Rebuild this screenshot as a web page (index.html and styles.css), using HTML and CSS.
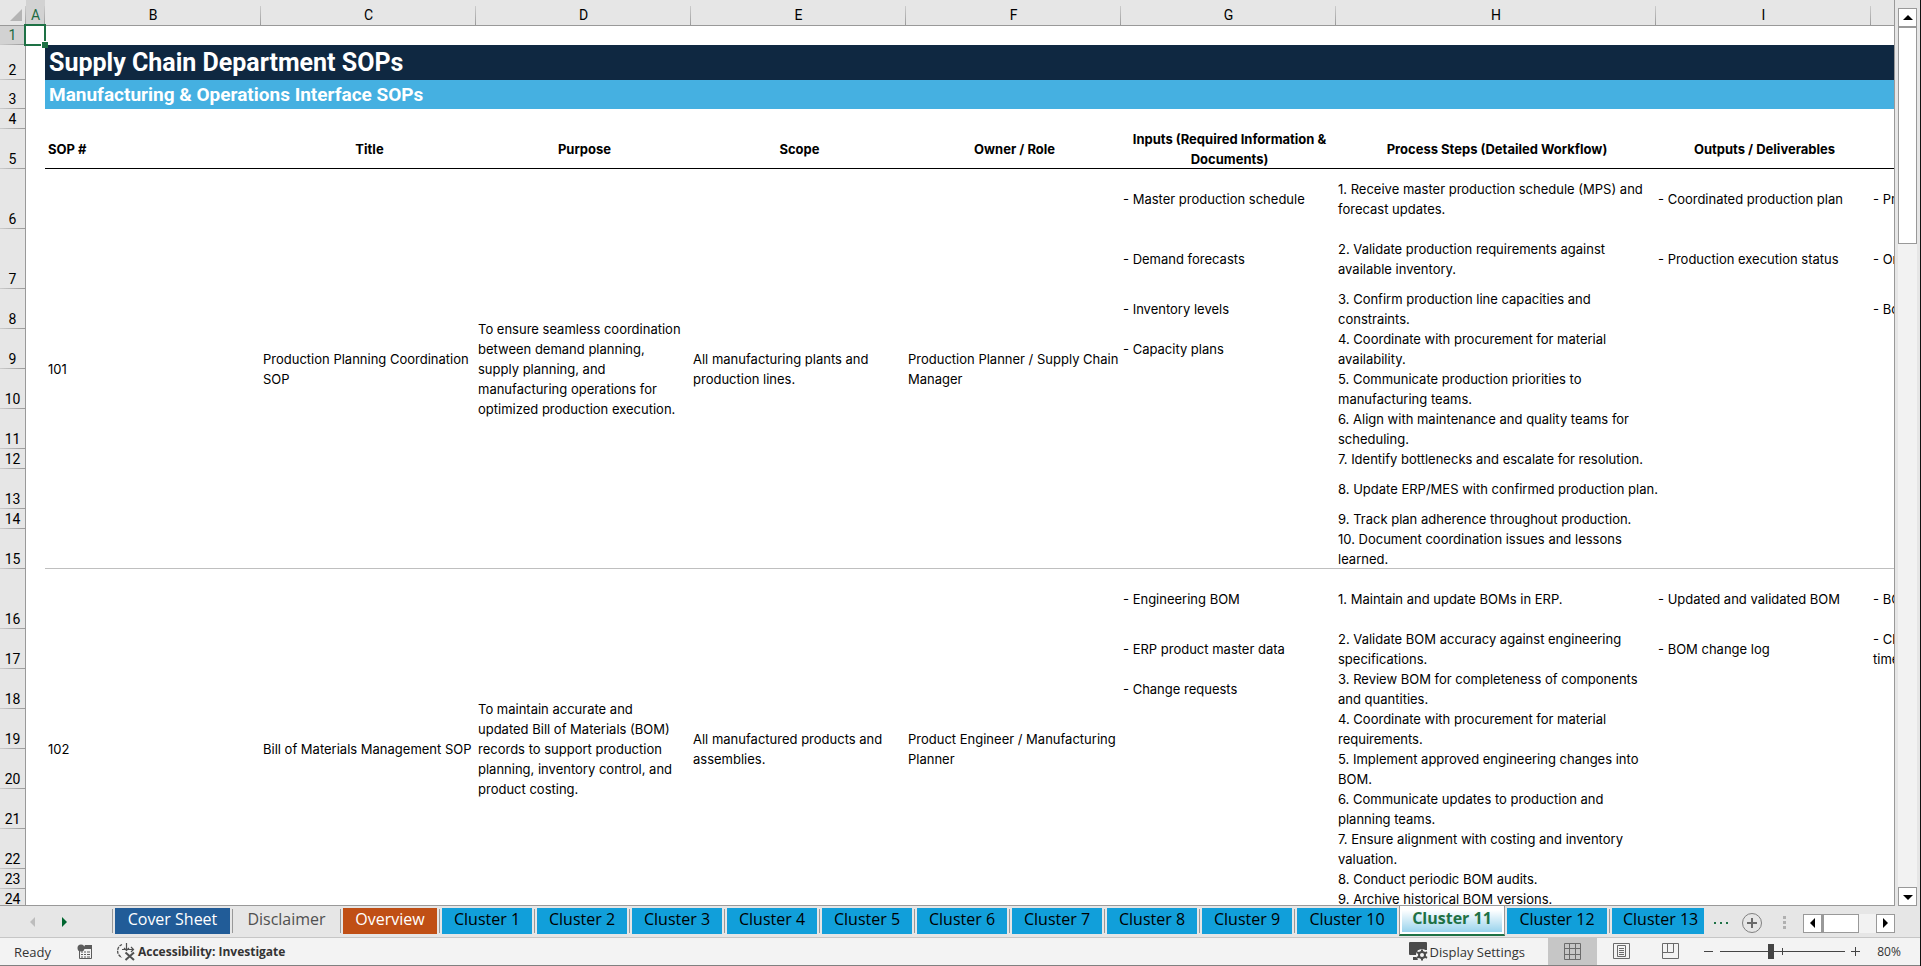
FILE: index.html
```html
<!DOCTYPE html>
<html lang="en">
<head>
    <meta charset="UTF-8">
    <meta name="viewport" content="width=device-width, initial-scale=1.0">
    <title>Supply Chain Department SOPs</title>
    <link rel="stylesheet" href="styles.css">
</head>
<body>
    <!-- Sheet -->
    <main class="workspace">
        <div class="grid">
            <table class="sheet">
                <colgroup>
                    <col class="col-num">
                    <col class="col-a">
                    <col class="col-b">
                    <col class="col-std">
                    <col class="col-std">
                    <col class="col-std">
                    <col class="col-std">
                    <col class="col-std">
                    <col class="col-steps">
                    <col class="col-std">
                    <col class="col-std">
                </colgroup>
                <thead>
                    <tr>
                        <th class="corner"><svg width="13" height="13" viewBox="0 0 13 13"><path d="M12 0v12H0z" fill="#b4b4b4"/></svg></th>
                        <th class="selected">A</th>
                        <th>B</th>
                        <th>C</th>
                        <th>D</th>
                        <th>E</th>
                        <th>F</th>
                        <th>G</th>
                        <th>H</th>
                        <th>I</th>
                        <th></th>
                    </tr>
                </thead>
                <tbody>
                    <tr class="h19">
                        <th class="selected">1</th>
                        <td class="active-cell"></td>
                        <td colspan="9"></td>
                    </tr>
                    <tr class="h35">
                        <th>2</th>
                        <td></td>
                        <td class="band-dark" colspan="9">Supply Chain Department SOPs</td>
                    </tr>
                    <tr class="h29">
                        <th>3</th>
                        <td></td>
                        <td class="band-light" colspan="9">Manufacturing &amp; Operations Interface SOPs</td>
                    </tr>
                    <tr class="h20">
                        <th>4</th>
                        <td></td>
                        <td colspan="9"></td>
                    </tr>
                    <tr class="h40 headings">
                        <th>5</th>
                        <td></td>
                        <td class="first">SOP #</td>
                        <td>Title</td>
                        <td>Purpose</td>
                        <td>Scope</td>
                        <td>Owner / Role</td>
                        <td>Inputs (Required Information &amp;<br>Documents)</td>
                        <td>Process Steps (Detailed Workflow)</td>
                        <td>Outputs / Deliverables</td>
                        <td></td>
                    </tr>

                    <!-- SOP 101 -->
                    <tr class="h60">
                        <th>6</th>
                        <td rowspan="10"></td>
                        <td class="first end" rowspan="10">101</td>
                        <td class="end" rowspan="10">Production Planning Coordination<br>SOP</td>
                        <td class="end" rowspan="10">To ensure seamless coordination<br>between demand planning,<br>supply planning, and<br>manufacturing operations for<br>optimized production execution.</td>
                        <td class="end" rowspan="10">All manufacturing plants and<br>production lines.</td>
                        <td class="end" rowspan="10">Production Planner / Supply Chain<br>Manager</td>
                        <td>- Master production schedule</td>
                        <td>1. Receive master production schedule (MPS) and<br>forecast updates.</td>
                        <td>- Coordinated production plan</td>
                        <td>- Production</td>
                    </tr>
                    <tr class="h60">
                        <th>7</th>
                        <td>- Demand forecasts</td>
                        <td>2. Validate production requirements against<br>available inventory.</td>
                        <td>- Production execution status</td>
                        <td>- Order</td>
                    </tr>
                    <tr class="h40">
                        <th>8</th>
                        <td>- Inventory levels</td>
                        <td>3. Confirm production line capacities and<br>constraints.</td>
                        <td></td>
                        <td>- Bottleneck</td>
                    </tr>
                    <tr class="h40">
                        <th>9</th>
                        <td>- Capacity plans</td>
                        <td>4. Coordinate with procurement for material<br>availability.</td>
                        <td></td>
                        <td></td>
                    </tr>
                    <tr class="h40">
                        <th>10</th>
                        <td></td>
                        <td>5. Communicate production priorities to<br>manufacturing teams.</td>
                        <td></td>
                        <td></td>
                    </tr>
                    <tr class="h40">
                        <th>11</th>
                        <td></td>
                        <td>6. Align with maintenance and quality teams for<br>scheduling.</td>
                        <td></td>
                        <td></td>
                    </tr>
                    <tr class="h20">
                        <th>12</th>
                        <td></td>
                        <td>7. Identify bottlenecks and escalate for resolution.</td>
                        <td></td>
                        <td></td>
                    </tr>
                    <tr class="h40">
                        <th>13</th>
                        <td></td>
                        <td>8. Update ERP/MES with confirmed production plan.</td>
                        <td></td>
                        <td></td>
                    </tr>
                    <tr class="h20">
                        <th>14</th>
                        <td></td>
                        <td>9. Track plan adherence throughout production.</td>
                        <td></td>
                        <td></td>
                    </tr>
                    <tr class="h40">
                        <th>15</th>
                        <td class="end"></td>
                        <td class="end">10. Document coordination issues and lessons<br>learned.</td>
                        <td class="end"></td>
                        <td class="end"></td>
                    </tr>

                    <!-- SOP 102 -->
                    <tr class="h60">
                        <th>16</th>
                        <td rowspan="10"></td>
                        <td class="first" rowspan="10">102</td>
                        <td rowspan="10">Bill of Materials Management SOP</td>
                        <td rowspan="10">To maintain accurate and<br>updated Bill of Materials (BOM)<br>records to support production<br>planning, inventory control, and<br>product costing.</td>
                        <td rowspan="10">All manufactured products and<br>assemblies.</td>
                        <td rowspan="10">Product Engineer / Manufacturing<br>Planner</td>
                        <td>- Engineering BOM</td>
                        <td>1. Maintain and update BOMs in ERP.</td>
                        <td>- Updated and validated BOM</td>
                        <td>- BOM</td>
                    </tr>
                    <tr class="h40">
                        <th>17</th>
                        <td>- ERP product master data</td>
                        <td>2. Validate BOM accuracy against engineering<br>specifications.</td>
                        <td>- BOM change log</td>
                        <td>- Change<br>time</td>
                    </tr>
                    <tr class="h40">
                        <th>18</th>
                        <td>- Change requests</td>
                        <td>3. Review BOM for completeness of components<br>and quantities.</td>
                        <td></td>
                        <td></td>
                    </tr>
                    <tr class="h40">
                        <th>19</th>
                        <td></td>
                        <td>4. Coordinate with procurement for material<br>requirements.</td>
                        <td></td>
                        <td></td>
                    </tr>
                    <tr class="h40">
                        <th>20</th>
                        <td></td>
                        <td>5. Implement approved engineering changes into<br>BOM.</td>
                        <td></td>
                        <td></td>
                    </tr>
                    <tr class="h40">
                        <th>21</th>
                        <td></td>
                        <td>6. Communicate updates to production and<br>planning teams.</td>
                        <td></td>
                        <td></td>
                    </tr>
                    <tr class="h40">
                        <th>22</th>
                        <td></td>
                        <td>7. Ensure alignment with costing and inventory<br>valuation.</td>
                        <td></td>
                        <td></td>
                    </tr>
                    <tr class="h20">
                        <th>23</th>
                        <td></td>
                        <td>8. Conduct periodic BOM audits.</td>
                        <td></td>
                        <td></td>
                    </tr>
                    <tr class="h20">
                        <th>24</th>
                        <td></td>
                        <td>9. Archive historical BOM versions.</td>
                        <td></td>
                        <td></td>
                    </tr>
                    <tr class="h20">
                        <th></th>
                        <td></td>
                        <td></td>
                        <td></td>
                        <td></td>
                    </tr>
                </tbody>
            </table>
        </div>
        <div class="vscroll">
            <button class="scroll-btn" aria-label="Scroll up"><svg width="10" height="6" viewBox="0 0 10 6"><path d="M5 0l5 5H0z"/></svg></button>
            <div class="v-thumb"></div>
            <div class="v-track"></div>
            <button class="scroll-btn" aria-label="Scroll down"><svg width="10" height="6" viewBox="0 0 10 6"><path d="M0 1h10L5 6z"/></svg></button>
        </div>
    </main>

    <!-- Sheet tabs -->
    <nav class="tabbar">
        <div class="tab-nav">
            <button aria-label="Previous sheet"><svg width="6" height="10" viewBox="0 0 6 10"><path d="M5 0v10L0 5z" fill="#bdbdbd"/></svg></button>
            <button aria-label="Next sheet"><svg width="6" height="10" viewBox="0 0 6 10"><path d="M0 0v10l5-5z" fill="#00652f"/></svg></button>
        </div>
        <div class="tabs">
            <span class="sep"></span>
            <button class="tab navy">Cover Sheet</button>
            <span class="sep"></span>
            <button class="tab plain">Disclaimer</button>
            <span class="sep"></span>
            <button class="tab orange">Overview</button>
            <span class="sep"></span>
            <button class="tab">Cluster 1</button>
            <span class="sep"></span>
            <button class="tab">Cluster 2</button>
            <span class="sep"></span>
            <button class="tab">Cluster 3</button>
            <span class="sep"></span>
            <button class="tab">Cluster 4</button>
            <span class="sep"></span>
            <button class="tab">Cluster 5</button>
            <span class="sep"></span>
            <button class="tab">Cluster 6</button>
            <span class="sep"></span>
            <button class="tab">Cluster 7</button>
            <span class="sep"></span>
            <button class="tab">Cluster 8</button>
            <span class="sep"></span>
            <button class="tab">Cluster 9</button>
            <span class="sep"></span>
            <button class="tab wide">Cluster 10</button>
            <button class="tab current">Cluster 11</button>
            <button class="tab wide">Cluster 12</button>
            <span class="sep"></span>
            <button class="tab last">Cluster 13</button>
        </div>
        <button class="more" aria-label="More sheets"><svg width="14" height="3" viewBox="0 0 14 3"><path d="M0 0h2v2H0zM6 0h2v2H6zM12 0h2v2h-2z" fill="#1e7145"/></svg></button>
        <button class="add" aria-label="New sheet"><svg width="22" height="22" viewBox="0 0 22 22"><circle cx="11" cy="11" r="9.5" fill="none" stroke="#808080"/><path d="M11 6v10M6 11h10" stroke="#6a6a6a" stroke-width="2"/></svg></button>
        <svg class="grip" width="3" height="14" viewBox="0 0 3 14"><path d="M0 0h3v3H0zM0 5h3v3H0zM0 10h3v3H0z" fill="#b0b0b0"/></svg>
        <div class="hscroll">
            <button class="scroll-btn" aria-label="Scroll left"><svg width="6" height="10" viewBox="0 0 6 10"><path d="M5 0v10L0 5z"/></svg></button>
            <div class="h-thumb"></div>
            <div class="h-track"></div>
            <button class="scroll-btn" aria-label="Scroll right"><svg width="6" height="10" viewBox="0 0 6 10"><path d="M0 0v10l5-5z"/></svg></button>
        </div>
    </nav>

    <!-- Status bar -->
    <footer class="status">
        <span class="ready">Ready</span>
        <button class="macro" aria-label="Record macro">
            <svg width="16" height="16" viewBox="0 0 16 16"><path d="M8 1h7v4H6" fill="#5c5c5c"/><path d="M2.500 7v7.500h12V4" fill="none" stroke="#5c5c5c"/><circle cx="4" cy="4" r="3.500" fill="#5c5c5c"/><path d="M4 8h2M7 8h2M10 8h3M4 10.500h2M7 10.500h2M10 10.500h3M4 13h2M7 13h2M10 13h3" stroke="#5c5c5c"/></svg>
        </button>
        <button class="a11y">
            <svg width="20" height="18" viewBox="0 0 20 18" fill="none" stroke="#505050"><path d="M6 1.500A7 7 0 0 0 6 14.500" stroke-dasharray="3 1" stroke-width="1.300"/><path d="M10.500 0v7M8 5l2.500 2.500L13 5M12 6.500h5M15 4l2.500 2.500L15 9M6 6.500h3" stroke-width="1.200"/><path d="M9.500 9.500l8.500 7.500M18 9.500L9.500 17" stroke-width="2"/></svg>
            Accessibility: Investigate
        </button>
        <button class="display">
            <svg width="20" height="19" viewBox="0 0 20 19"><path d="M1 0h16a1 1 0 0 1 1 1v7H9l-2 5H1a1 1 0 0 1-1-1V1a1 1 0 0 1 1-1zM4 15h4l1 3H4z" fill="#4a4a4a"/><circle cx="13" cy="13" r="6" fill="#f3f3f3"/><circle cx="13" cy="13" r="3" fill="none" stroke="#4a4a4a" stroke-width="2"/><path d="M13 7.500v2M13 16.500v2M8 10.200l2 1.200M16 14.600l2 1.200M8 15.800l2-1.200M16 11.400l2-1.200" stroke="#4a4a4a" stroke-width="2"/></svg>
            Display Settings
        </button>
        <div class="views">
            <button class="view on" aria-label="Normal"><svg width="17" height="17" viewBox="0 0 17 17"><path d="M.5.5h16v16H.5zM.5 5.500h16M.5 11.500h16M5.500.5v16M11.500.5v16" fill="none" stroke="#6a6a6a"/></svg></button>
            <button class="view" aria-label="Page Layout"><svg width="17" height="17" viewBox="0 0 17 17"><path d="M.5.5h16v15H.5zM4.500 2.500h8v11h-8zM6 5.500h5M6 7.500h5M6 9.500h5M6 11.500h5" fill="none" stroke="#6a6a6a"/></svg></button>
            <button class="view" aria-label="Page Break Preview"><svg width="17" height="17" viewBox="0 0 17 17"><path d="M.5.5h16v15H.5zM5.500.5v9h6v-9M.5 9.500h5" fill="none" stroke="#6a6a6a"/></svg></button>
        </div>
        <div class="zoom">
            <button aria-label="Zoom out"><svg width="10" height="10" viewBox="0 0 10 10"><path d="M0 4.500h9" stroke="#444"/></svg></button>
            <input type="range" min="0" max="100" value="40" aria-label="Zoom">
            <button aria-label="Zoom in"><svg width="10" height="10" viewBox="0 0 10 10"><path d="M0 4.500h9M4.500 0v9" stroke="#444"/></svg></button>
        </div>
        <button class="percent">80%</button>
    </footer>
</body>
</html>
```
FILE: styles.css
```css
* {
    box-sizing: border-box;
}
body {
    margin: 0;
    height: 100vh;
    display: flex;
    flex-direction: column;
    overflow: hidden;
    background: #e6e6e6;
    border-right: 1px solid #111;
    font-family: Roboto, "Liberation Sans", sans-serif;
    font-size: 14px;
    color: #000;
}
button {
    display: flex;
    align-items: center;
    justify-content: center;
    padding: 0;
    border: none;
    background: none;
    font: inherit;
    color: inherit;
}
svg {
    display: block;
    flex: none;
}

/* Sheet */
.workspace {
    flex: 1;
    min-height: 0;
    display: flex;
}
.grid {
    flex: 1;
    min-width: 0;
    overflow: hidden;
    background: linear-gradient(#e6e6e6 25px, #fff 25px);
    border-right: 1px solid #999;
    border-bottom: 1px solid #999;
}
.sheet {
    table-layout: fixed;
    width: 2085px;
    border-collapse: separate;
    border-spacing: 0;
    line-height: 20px;
}
.col-num { width: 26px; }
.col-a { width: 19px; }
.col-b { width: 216px; }
.col-std { width: 215px; }
.col-steps { width: 320px; }

.sheet td {
    padding: 0 0 0 2px;
    font-family: Inter, Roboto, sans-serif;
    font-size: 13px;
    white-space: nowrap;
    vertical-align: middle;
}
.sheet th {
    padding: 0;
    font-weight: 400;
    background: #e6e6e6;
}
.sheet thead th {
    height: 26px;
    padding-top: 5px;
    border-bottom: 1px solid #999;
    background: linear-gradient(#ccc, #999) right 6px / 1px 20px no-repeat #e6e6e6;
}
.sheet thead .corner svg {
    margin-left: 10px;
}
.sheet tbody th {
    vertical-align: bottom;
    border-right: 1px solid #999;
    background: linear-gradient(to right, #ccc, #999) left bottom / 100% 1px no-repeat #e6e6e6;
}
.sheet thead .selected,
.sheet tbody .selected {
    background-color: #d2d2d2;
    color: #1e6b43;
}
.h19 { height: 19px; line-height: 19px; }
.h20 { height: 20px; }
.h29 { height: 29px; }
.h35 { height: 35px; }
.h40 { height: 40px; }
.h60 { height: 60px; }

.active-cell {
    position: relative;
}
.active-cell::before {
    content: "";
    position: absolute;
    inset: -2px -1px -1px -2px;
    border: 2px solid #1e7145;
}
.active-cell::after {
    content: "";
    position: absolute;
    right: -3px;
    bottom: -3px;
    width: 6px;
    height: 6px;
    background: #1e7145;
    border-top: 1px solid #fff;
    border-left: 1px solid #fff;
}
.sheet .band-dark,
.sheet .band-light {
    padding-left: 4px;
    color: #fff;
    font-family: Roboto, sans-serif;
    font-weight: 700;
}
.sheet .band-dark {
    background: #0f2841;
    font-size: 25px;
    line-height: 35px;
}
.sheet .band-light {
    background: #45b0e1;
    font-size: 19px;
    line-height: 28px;
}
.headings td {
    font-weight: 700;
    text-align: center;
    box-shadow: inset 0 -1px #000;
}
.headings td:nth-child(2) {
    box-shadow: none;
}
.sheet .first {
    padding-left: 3px;
    text-align: left;
}
.end {
    box-shadow: inset 0 -1px #bfbfbf;
}

/* Scroll bars */
.vscroll {
    display: flex;
    flex-direction: column;
    width: 25px;
    padding: 8px 3px 0;
}
.scroll-btn {
    flex: none;
    width: 19px;
    height: 19px;
    background: #fff;
    border: 1px solid #999;
}
.v-thumb {
    flex: 1;
    background: #fff;
    border: 1px solid #999;
}
.v-track {
    flex: 3;
    background: #f2f2f2;
}
.hscroll {
    display: flex;
    height: 19px;
    width: 92px;
    margin-top: 3px;
    margin-right: 25px;
}
.h-thumb {
    flex: 2;
    background: #fff;
    border: 1px solid #999;
    border-left-width: 2px;
}
.h-track {
    flex: 1;
    background: #f2f2f2;
}

/* Sheet tabs */
.tabbar {
    display: flex;
    align-items: center;
    height: 32px;
    border-bottom: 1px solid #c6c6c6;
    font-family: "Open Sans", "Noto Sans", sans-serif;
    font-size: 16px;
}
.tab-nav {
    display: flex;
    gap: 26px;
    width: 112px;
    padding-left: 30px;
}
.tabs {
    display: flex;
    gap: 2px;
    height: 32px;
}
.sep {
    width: 1px;
    height: 24px;
    margin-top: 3px;
    background: #999;
}
.tab {
    min-width: 90px;
    height: 26px;
    margin-top: 2px;
    padding: 0 11px 4px;
    background: #119fda;
    white-space: nowrap;
}
.wide {
    min-width: 100px;
}
.navy {
    min-width: 115px;
    background: #215c98;
    color: #fff;
}
.plain {
    min-width: 103px;
    background: none;
    color: #505050;
}
.orange {
    min-width: 94px;
    background: #c04f15;
    color: #fff;
}
.tab.last {
    padding-right: 6px;
}
.tab.current {
    min-width: 106px;
    height: 30px;
    margin-top: 0;
    padding-bottom: 4px;
    border: 1px solid #999;
    border-top: none;
    border-bottom: 2px solid #1e7145;
    box-shadow: inset 2px 0 #fff, inset -2px 0 #fff, inset 0 -2px #fff;
    background: linear-gradient(#fff 4px, #90cfeb);
    color: #1e7145;
    font-weight: 700;
}
.more {
    margin-left: 10px;
    margin-top: 4px;
}
.add {
    margin-left: 13px;
    margin-top: 3px;
}
.grip {
    margin: 3px auto 0 20px;
}

/* Status bar */
.status {
    display: flex;
    align-items: center;
    height: 28px;
    background: #f3f3f3;
    border-bottom: 1px solid #808080;
    font-family: "Open Sans", "Noto Sans", sans-serif;
    font-size: 13px;
    color: #333;
}
.ready {
    width: 77px;
    padding-left: 14px;
}
.a11y {
    gap: 2px;
    margin-left: 23px;
    font-size: 12px;
    font-weight: 700;
}
.display {
    gap: 1px;
    margin-left: auto;
}
.views {
    display: flex;
    height: 27px;
    margin-left: 23px;
}
.view {
    width: 49px;
}
.on {
    background: #c6c6c6;
}
.zoom {
    display: flex;
    align-items: center;
    gap: 6px;
    margin-left: 9px;
}
.zoom input {
    appearance: none;
    width: 125px;
    height: 16px;
    margin: 0;
    background:
        linear-gradient(#444, #444) center / 100% 1px no-repeat,
        linear-gradient(#444, #444) center / 1px 7px no-repeat;
}
.zoom input::-webkit-slider-thumb {
    appearance: none;
    width: 6px;
    height: 15px;
    background: #444;
}
.percent {
    width: 28px;
    margin: 0 17px 0 14px;
    font-size: 12px;
}
```
